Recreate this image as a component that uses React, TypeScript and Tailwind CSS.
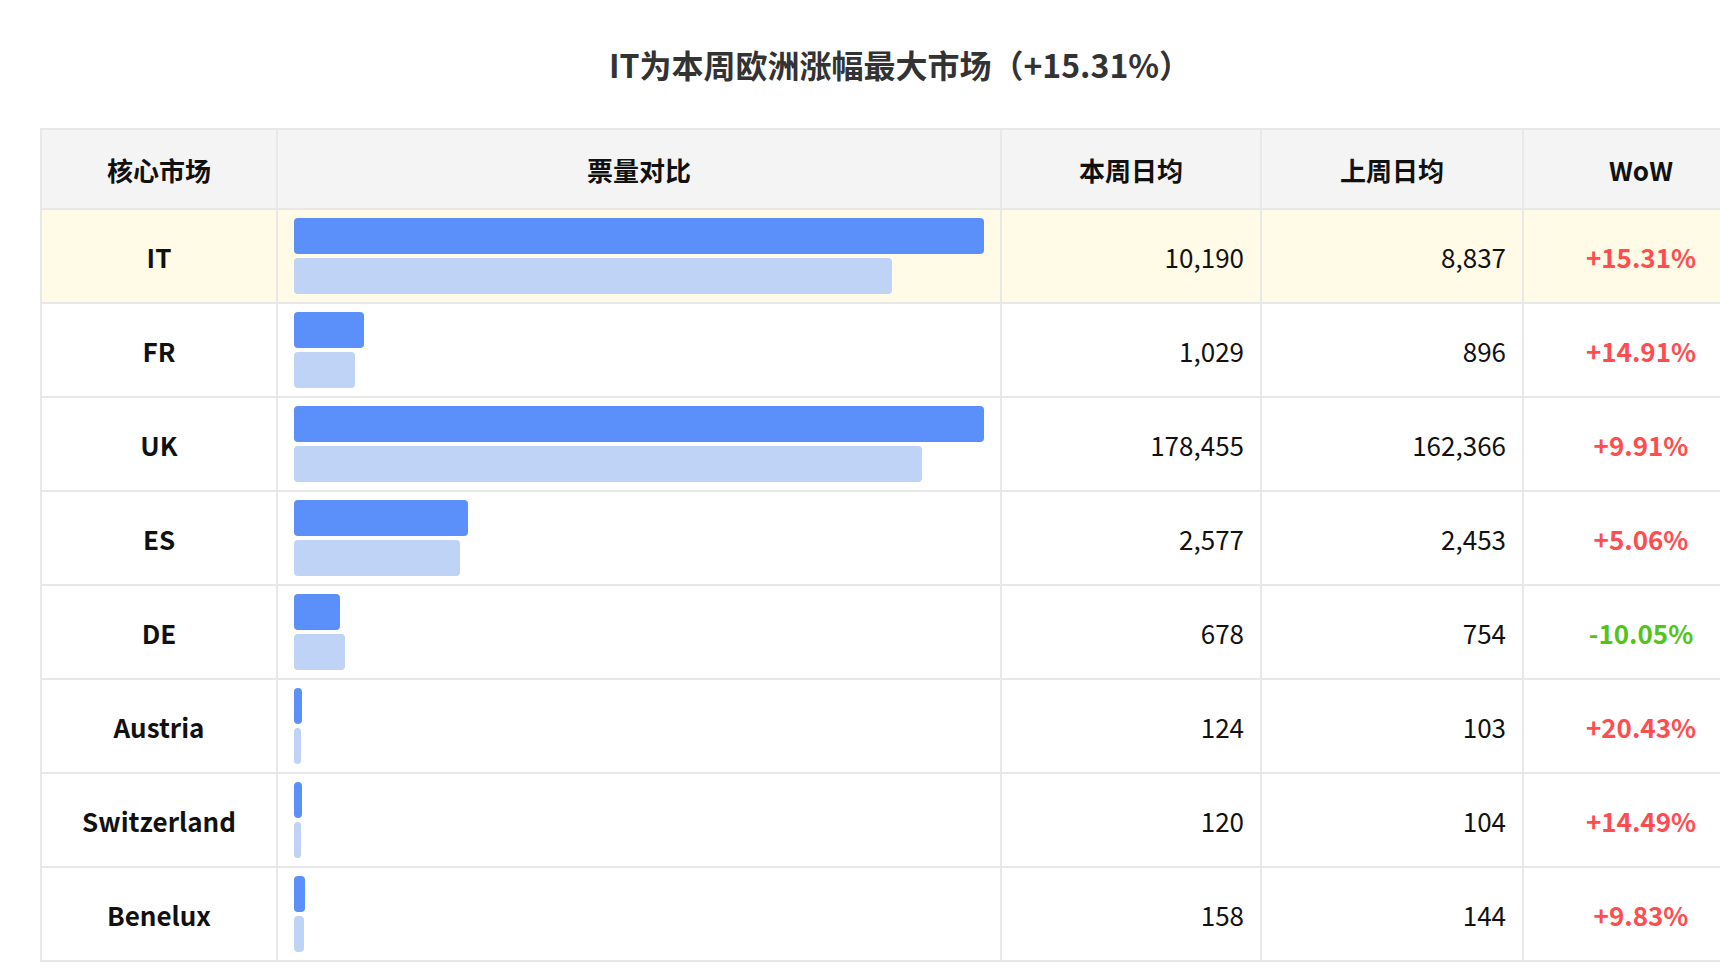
import React from 'react';

interface MarketRow {
  name: string;
  current: number;
  previous: number;
  scale: number;
  wow: string;
  highlight?: boolean;
}

const BASE_SCALE = 10190;

const rows: MarketRow[] = [
  { name: 'IT', current: 10190, previous: 8837, scale: BASE_SCALE, wow: '+15.31%', highlight: true },
  { name: 'FR', current: 1029, previous: 896, scale: BASE_SCALE, wow: '+14.91%' },
  { name: 'UK', current: 178455, previous: 162366, scale: 178455, wow: '+9.91%' },
  { name: 'ES', current: 2577, previous: 2453, scale: BASE_SCALE, wow: '+5.06%' },
  { name: 'DE', current: 678, previous: 754, scale: BASE_SCALE, wow: '-10.05%' },
  { name: 'Austria', current: 124, previous: 103, scale: BASE_SCALE, wow: '+20.43%' },
  { name: 'Switzerland', current: 120, previous: 104, scale: BASE_SCALE, wow: '+14.49%' },
  { name: 'Benelux', current: 158, previous: 144, scale: BASE_SCALE, wow: '+9.83%' },
];

const fmt = (n: number) => n.toLocaleString('en-US');

const pct = (v: number, scale: number) => `${Math.min(1, v / scale) * 100}%`;

function HeaderCell({ children }: { children: React.ReactNode }) {
  return (
    <div className="h-20 border-r-2 border-b-2 border-[#e8e8e8] bg-[#f4f4f4] flex items-center justify-center text-[26px] font-bold text-[#111]">
      {children}
    </div>
  );
}

function Row({ row }: { row: MarketRow }) {
  const bg = row.highlight ? 'bg-[#fffbe6]' : 'bg-white';
  const cell = `h-[94px] border-r-2 border-b-2 border-[#e8e8e8] ${bg}`;
  const negative = row.wow.startsWith('-');

  return (
    <>
      <div className={`${cell} flex items-center justify-center text-[26px] font-bold text-[#111]`}>
        {row.name}
      </div>
      <div className={`${cell} flex flex-col gap-1 px-4 py-2`}>
        <div className="h-9 rounded bg-[#5b8ff9]" style={{ width: pct(row.current, row.scale) }} />
        <div className="h-9 rounded bg-[#bed3f5]" style={{ width: pct(row.previous, row.scale) }} />
      </div>
      <div className={`${cell} flex items-center justify-end pr-4 text-[26px] text-[#111]`}>
        {fmt(row.current)}
      </div>
      <div className={`${cell} flex items-center justify-end pr-4 text-[26px] text-[#111]`}>
        {fmt(row.previous)}
      </div>
      <div
        className={`${cell} flex items-center justify-center text-[26px] font-bold ${
          negative ? 'text-[#52c41a]' : 'text-[#ff4d4f]'
        }`}
      >
        {row.wow}
      </div>
    </>
  );
}

export default function App() {
  return (
    <div
      className="w-full h-screen overflow-hidden bg-white"
      style={{ fontFamily: '"Noto Sans CJK SC", "Noto Sans", sans-serif' }}
    >
      <div className="w-[1800px] px-10 pt-10">
        <h1 className="text-center text-[32px] leading-[48px] font-bold text-[#333]">
          IT为本周欧洲涨幅最大市场（+15.31%）
        </h1>

        <div className="mt-10 grid grid-cols-[236px_724px_260px_262px_236px] border-l-2 border-t-2 border-[#e8e8e8]">
          <HeaderCell>核心市场</HeaderCell>
          <HeaderCell>票量对比</HeaderCell>
          <HeaderCell>本周日均</HeaderCell>
          <HeaderCell>上周日均</HeaderCell>
          <HeaderCell>WoW</HeaderCell>
          {rows.map((r) => (
            <Row key={r.name} row={r} />
          ))}
        </div>
      </div>
    </div>
  );
}
